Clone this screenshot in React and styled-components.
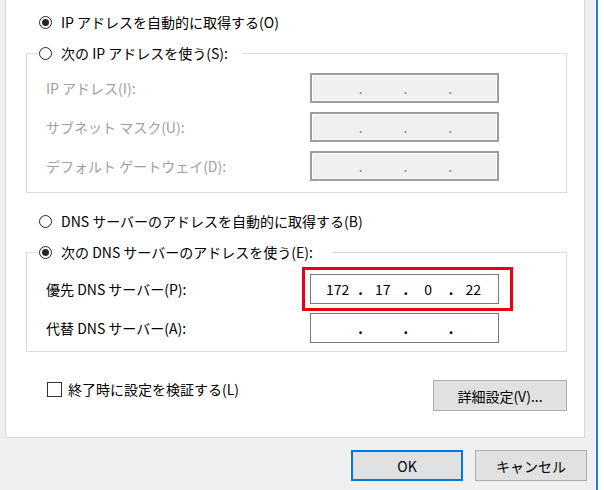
import styled, { createGlobalStyle } from 'styled-components'

const GlobalStyle = createGlobalStyle`
  html, body {
    margin: 0;
    padding: 0;
    background: #ffffff;
  }
  body {
    font-family: "Noto Sans CJK JP", "Noto Sans", sans-serif;
    font-size: 14px;
    color: #000000;
  }
`

const Window = styled.div`
  width: 596px;
  height: 490px;
  background: #f0f0f0;
  border-right: 2px solid #1e82d6;
  overflow: hidden;
  display: flex;
  flex-direction: column;
`

const TabPanel = styled.div`
  box-sizing: border-box;
  margin: -1px 0 0 5px;
  width: 580px;
  height: 439px;
  background: #ffffff;
  border: 1px solid #d9d9d9;
  padding: 12px 0 0 20px;
`

const OptionRow = styled.label`
  display: flex;
  align-items: center;
  gap: 9px;
  height: 20px;
  margin: ${(p) => p.$mt || 0}px 0 0 13px;
  white-space: nowrap;
`

const Radio = styled.span`
  box-sizing: border-box;
  flex: none;
  width: 13px;
  height: 13px;
  border: 1px solid #262626;
  border-radius: 50%;
  display: flex;
  align-items: center;
  justify-content: center;

  &::after {
    content: '';
    width: 7px;
    height: 7px;
    border-radius: 50%;
    background: ${(p) => (p.$checked ? '#262626' : 'transparent')};
  }
`

const Group = styled.fieldset`
  box-sizing: border-box;
  width: 541px;
  margin: ${(p) => p.$mt}px 0 0;
  padding: 0 0 ${(p) => p.$pb}px 19px;
  border: 1px solid #dcdcdc;
  min-inline-size: 0;
`

const Legend = styled.legend`
  width: ${(p) => p.$w}px;
  margin-left: -7px;
  padding: 0;
`

const LegendInner = styled.span`
  display: flex;
  align-items: center;
  gap: 9px;
  height: 20px;
  white-space: nowrap;
`

const Rows = styled.div`
  display: flex;
  flex-direction: column;
  gap: 9px;
  padding-top: ${(p) => p.$pt}px;
`

const FieldRow = styled.div`
  display: grid;
  grid-template-columns: 264px 189px;
  align-items: center;
  height: 30px;
`

const FieldLabel = styled.span`
  color: ${(p) => (p.$disabled ? '#a0a0a0' : '#000000')};
  white-space: nowrap;
`

const Highlight = styled.div`
  position: relative;
  height: 30px;

  &::after {
    content: '';
    position: absolute;
    top: -7px;
    bottom: -7px;
    left: -8px;
    right: -14px;
    border: 3px solid #e60012;
    pointer-events: none;
  }
`

const IpBox = styled.div`
  box-sizing: border-box;
  height: 30px;
  display: grid;
  grid-template-columns: 1fr 4px 1fr 4px 1fr 4px 1fr;
  align-items: center;
  padding: 0 4px 0 6px;
  background: ${(p) => (p.$disabled ? '#f0f0f0' : '#ffffff')};
  border: ${(p) => (p.$disabled ? '2px solid #9e9e9e' : '1px solid #7a7a7a')};
  box-shadow: ${(p) => (p.$disabled ? 'inset 0 0 0 1px #fbfbfb' : 'none')};
  color: ${(p) => (p.$disabled ? '#7f8a99' : '#000000')};
`

const Octet = styled.span`
  text-align: center;
  line-height: 1;
`

const Dot = styled.span`
  text-align: center;
  line-height: 1;
  font-weight: ${(p) => (p.$disabled ? 400 : 700)};
`

const BottomRow = styled.div`
  width: 541px;
  margin-top: 27px;
  display: flex;
  justify-content: space-between;
  align-items: flex-start;
`

const CheckRow = styled.label`
  display: flex;
  align-items: center;
  gap: 6px;
  height: 20px;
  margin-left: 21px;
  white-space: nowrap;
`

const CheckBox = styled.span`
  box-sizing: border-box;
  width: 15px;
  height: 15px;
  border: 1px solid #333333;
  background: #ffffff;
`

const Button = styled.button`
  box-sizing: border-box;
  width: ${(p) => p.$w}px;
  height: 31px;
  margin-top: ${(p) => p.$mt || 0}px;
  padding: 0;
  font: inherit;
  color: #000000;
  background: #e1e1e1;
  border: ${(p) => (p.$default ? '2px solid #0078d7' : '1px solid #adadad')};
`

const ButtonBar = styled.div`
  display: flex;
  justify-content: flex-end;
  gap: 12px;
  margin-top: 12px;
  padding-right: 9px;
`

const IpField = ({ value, disabled }) => {
  const parts = value || ['', '', '', '']
  return (
    <IpBox $disabled={disabled}>
      <Octet>{parts[0]}</Octet>
      <Dot $disabled={disabled}>.</Dot>
      <Octet>{parts[1]}</Octet>
      <Dot $disabled={disabled}>.</Dot>
      <Octet>{parts[2]}</Octet>
      <Dot $disabled={disabled}>.</Dot>
      <Octet>{parts[3]}</Octet>
    </IpBox>
  )
}

const ipRows = [
  'IP アドレス(I):',
  'サブネット マスク(U):',
  'デフォルト ゲートウェイ(D):',
]

const App = () => (
  <>
    <GlobalStyle />
    <Window>
      <TabPanel>
        <OptionRow>
          <Radio $checked />
          <span>IP アドレスを自動的に取得する(O)</span>
        </OptionRow>

        <Group $mt={11} $pb={11}>
          <Legend $w={203}>
            <LegendInner>
              <Radio />
              <span>次の IP アドレスを使う(S):</span>
            </LegendInner>
          </Legend>
          <Rows $pt={10}>
            {ipRows.map((label) => (
              <FieldRow key={label}>
                <FieldLabel $disabled>{label}</FieldLabel>
                <IpField disabled />
              </FieldRow>
            ))}
          </Rows>
        </Group>

        <OptionRow $mt={18}>
          <Radio />
          <span>DNS サーバーのアドレスを自動的に取得する(B)</span>
        </OptionRow>

        <Group $mt={11} $pb={8}>
          <Legend $w={294}>
            <LegendInner>
              <Radio $checked />
              <span>次の DNS サーバーのアドレスを使う(E):</span>
            </LegendInner>
          </Legend>
          <Rows $pt={12}>
            <FieldRow>
              <FieldLabel>優先 DNS サーバー(P):</FieldLabel>
              <Highlight>
                <IpField value={['172', '17', '0', '22']} />
              </Highlight>
            </FieldRow>
            <FieldRow>
              <FieldLabel>代替 DNS サーバー(A):</FieldLabel>
              <IpField />
            </FieldRow>
          </Rows>
        </Group>

        <BottomRow>
          <CheckRow>
            <CheckBox />
            <span>終了時に設定を検証する(L)</span>
          </CheckRow>
          <Button $w={134} $mt={1}>詳細設定(V)...</Button>
        </BottomRow>
      </TabPanel>

      <ButtonBar>
        <Button $w={112} $default>OK</Button>
        <Button $w={112}>キャンセル</Button>
      </ButtonBar>
    </Window>
  </>
)

export default App
